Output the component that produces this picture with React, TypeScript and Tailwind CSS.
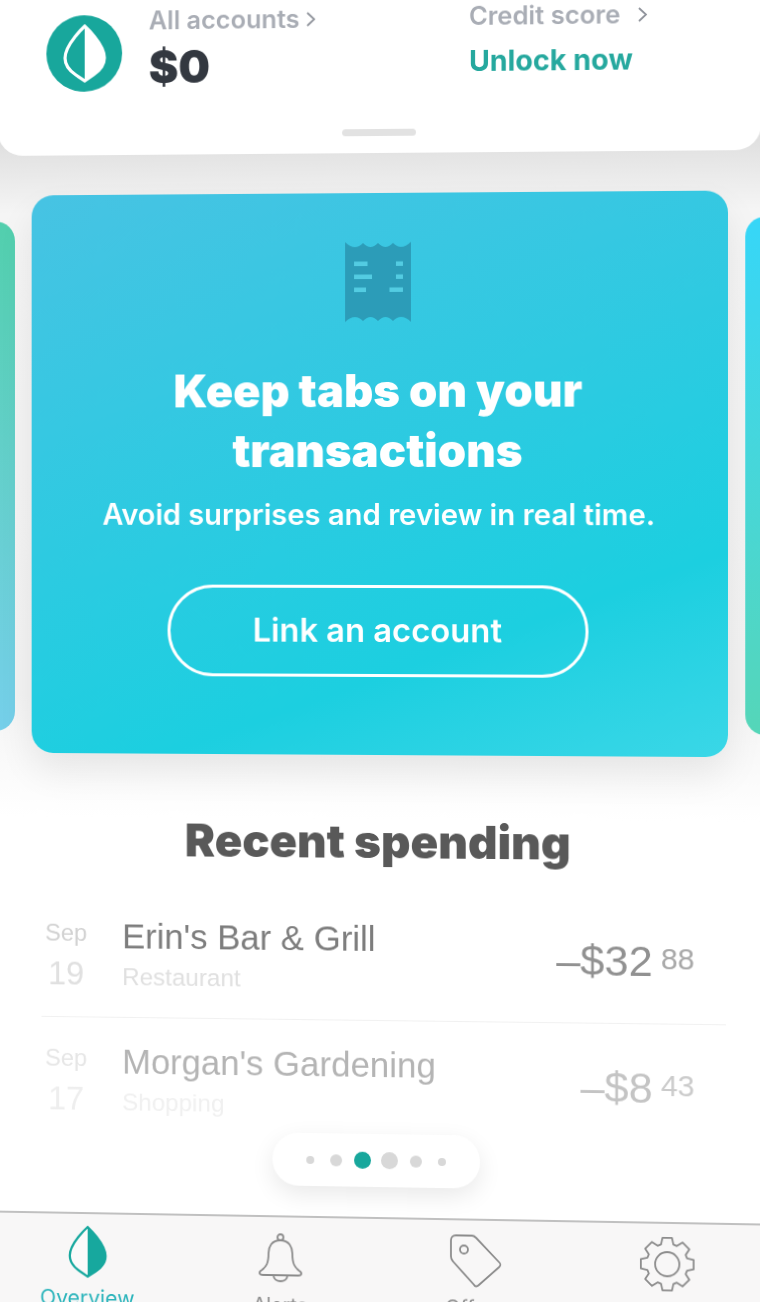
import React from "react";

const inter = "font-['Inter','Liberation_Sans',sans-serif]";

function Leaf({ className, cut }: { className?: string; cut?: boolean }) {
  const outline = "M20 1C20 1 40 19 40 33C40 41 35 46 29 50L20 56L11 50C5 46 0 41 0 33C0 19 20 1 20 1Z";
  const right = "M20 1C20 1 40 19 40 33C40 41 35 46 29 50L20 56Z";
  return (
    <svg viewBox="-2 -1 44 59" className={className}>
      {cut ? (
        <>
          <path d={outline} fill="none" stroke="#fff" strokeWidth="3.2" />
          <path d={right} fill="#fff" />
        </>
      ) : (
        <>
          <path d={outline} fill="#fbfafa" stroke="#17a89e" strokeWidth="2.5" />
          <path d={right} fill="#17a89e" />
        </>
      )}
    </svg>
  );
}

function Chevron() {
  return (
    <svg viewBox="0 0 9 15" className="w-[9px] h-[15px]" fill="none" stroke="#8f939b" strokeWidth="1.8">
      <path d="M1 1L8 7.5L1 14" />
    </svg>
  );
}

function Receipt() {
  return (
    <svg viewBox="0 0 66 80" className="w-[66px] h-[80px]">
      <path
        d="M0 0Q5 5 10 5Q14 5 18 1Q22 5 25.500 5Q29 5 33 1Q37 5 40.500 5Q44 5 48 1Q52 5 56 5Q61 5 66 0V80Q61 75 56 75Q52 75 48 79Q44 75 40.500 75Q37 75 33 79Q29 75 25.500 75Q22 75 18 79Q14 75 10 75Q5 75 0 80Z"
        fill="#2c9cb8"
      />
      <g fill="#53cce2">
        <rect x="9" y="19.500" width="13.500" height="4.500" />
        <rect x="9" y="32.500" width="18" height="4.500" />
        <rect x="9" y="45.500" width="12" height="4.500" />
        <rect x="51" y="19.500" width="7" height="4.500" />
        <rect x="51" y="32.500" width="7" height="4.500" />
        <rect x="44.500" y="45.500" width="13.500" height="4.500" />
      </g>
    </svg>
  );
}

function Bell() {
  return (
    <svg viewBox="0 0 44 50" className="w-[44px] h-[50px]" fill="none" stroke="#8c8c8c" strokeWidth="1.8">
      <circle cx="22" cy="4" r="3" />
      <path d="M22 7C13 7 10 14 10 20C10 30 8 34 2 38C0 40 1 42 4 42L40 42C43 42 44 40 42 38C36 34 34 30 34 20C34 14 31 7 22 7Z" />
      <path d="M15 42C15 50 29 50 29 42" />
    </svg>
  );
}

function Tag() {
  return (
    <svg viewBox="0 0 54 54" className="w-[54px] h-[54px]" fill="none" stroke="#8c8c8c" strokeWidth="1.8">
      <path d="M3 7C3 4 5 2 8 2L24 2C26 2 27 3 28 4L51 28C53 30 53 31 51 33L31 51C29 53 27 53 26 51L5 28C3 26 3 25 3 23Z" />
      <circle cx="16" cy="16" r="4" />
    </svg>
  );
}

// eight square teeth round a ring
function Gear() {
  const pts: string[] = [];
  const c = 28;
  for (let i = 0; i < 8; i++) {
    const a = (i * Math.PI) / 4;
    const s = Math.PI / 14;
    [
      [20.5, a - s * 1.35],
      [26.5, a - s * 0.8],
      [26.5, a + s * 0.8],
      [20.5, a + s * 1.35],
    ].forEach(([r, t]) => {
      pts.push(`${(c + r * Math.cos(t)).toFixed(1)},${(c + r * Math.sin(t)).toFixed(1)}`);
    });
  }
  return (
    <svg viewBox="0 0 56 56" className="w-[56px] h-[56px]" fill="none" stroke="#8c8c8c" strokeWidth="1.8" strokeLinejoin="round">
      <polygon points={pts.join(" ")} />
      <circle cx="28" cy="28" r="12" />
    </svg>
  );
}

function Row({
  mon,
  day,
  name,
  cat,
  dollars,
  cents,
  colors,
}: {
  mon: string;
  day: string;
  name: string;
  cat: string;
  dollars: string;
  cents: string;
  colors: string[];
}) {
  return (
    <div className="flex items-center h-[125px] font-['Liberation_Sans',sans-serif]">
      <div className="w-[50px] mr-[32px] pt-[6px] flex flex-col items-center">
        <span className={`text-[24px] leading-[30px] ${colors[0]}`}>{mon}</span>
        <span className={`text-[33px] leading-[48px] mt-[2px] ${colors[1]}`}>{day}</span>
      </div>
      <div className="flex-1 flex flex-col">
        <span className={`text-[35px] leading-[44px] ${colors[2]}`}>{name}</span>
        <span className={`text-[24.5px] leading-[38px] ${colors[3]}`}>{cat}</span>
      </div>
      <div className="flex items-start pr-[31px] pt-[1px]">
        <span className={`text-[43px] leading-[48px] ${colors[4]}`}>{dollars}</span>
        <span className={`text-[30px] leading-[36px] ml-[8px] mt-[4px] ${colors[5]}`}>{cents}</span>
      </div>
    </div>
  );
}

export default function App() {
  return (
    <div className="relative w-[760px] h-[1302px] overflow-hidden bg-white">
      {/* whole page is tilted slightly in the shot */}
      <div className={`w-[800px] h-[1367px] -ml-[23px] flex flex-col blur-[0.6px] origin-[400px_492px] [transform:perspective(3000px)_rotateY(-4deg)] ${inter}`}>
        {/* Top sheet */}
        <div className="relative z-10 h-[153px] shrink-0 ml-[16px] mr-[18px] bg-white rounded-b-[26px] flex pl-[50px] pt-[12px]">
          <div className="w-[77px] h-[77px] rounded-full bg-[#18a79c] flex items-center justify-center">
            <Leaf cut className="w-[44px] h-[59px]" />
          </div>
          <div className="w-[349px] pl-[27px] flex flex-col">
            <div className="flex items-center gap-[7px] text-[25.5px] leading-[10px] h-[10px] font-semibold text-[#a9adb5] mt-[1px]">
              All accounts <Chevron />
            </div>
            <div className="mt-[17px] text-[45px] leading-[50px] font-black text-[#333840]">$0</div>
          </div>
          <div className="flex flex-col -mt-[5px]">
            <div className="flex items-center gap-[18px] text-[25.5px] leading-[20px] font-semibold text-[#a9adb5]">
              Credit score <Chevron />
            </div>
            <div className="mt-[18px] text-[28.5px] leading-[34px] font-bold text-[#25a89e]">Unlock now</div>
          </div>
          <div className="absolute bottom-[17px] left-[349px] w-[74px] h-[7px] rounded-full bg-[#e2e2e2]" />
        </div>

        {/* Carousel */}
        <div className="h-[690px] shrink-0 -mt-[24px] pt-[64px] bg-[linear-gradient(180deg,#dcdcdc_0%,#f5f5f5_12%,#f3f3f3_82%,#ffffff_100%)] flex justify-center gap-[17px] items-start">
          <div className="w-[700px] h-[514px] mt-[26px] shrink-0 rounded-[20px] bg-gradient-to-b from-[#52cfad] to-[#75cfea]" />
          <div className="w-[698px] h-[562px] shrink-0 rounded-[22px] bg-[linear-gradient(160deg,#47c3e3_0%,#1ccfe0_75%,#3ad7e7_100%)] shadow-[0_18px_36px_rgba(0,0,0,0.08)] flex flex-col items-center text-white">
            <div className="mt-[49px] ml-[2px] h-[80px]">
              <Receipt />
            </div>
            <h2 className="mt-[39px] w-[520px] text-center text-[45.5px] leading-[60px] font-black">Keep tabs on your transactions</h2>
            <p className="mt-[14px] text-[29.3px] leading-[40px] font-semibold whitespace-nowrap">Avoid surprises and review in real time.</p>
            <button className="mt-[50px] w-[422px] h-[92px] rounded-full border-[3.5px] border-white text-[32.8px] font-semibold">Link an account</button>
          </div>
          <div className="w-[700px] h-[514px] mt-[26px] shrink-0 rounded-[20px] bg-gradient-to-b from-[#36d6f8] to-[#55d6b8]" />
        </div>

        {/* Recent spending */}
        <div className="flex-1 relative">
          <h2 className="text-center text-[45.8px] leading-[50px] font-black text-[#595959] -mt-[2px]">Recent spending</h2>
          <div className="mt-[28px] pl-[61px] pr-[53px]">
            <Row
              mon="Sep"
              day="19"
              name="Erin's Bar & Grill"
              cat="Restaurant"
              dollars="–$32"
              cents="88"
              colors={["text-[#d2d2d2]", "text-[#e0e0e0]", "text-[#7d7d7d]", "text-[#e0e0e0]", "text-[#919191]", "text-[#a8a8a8]"]}
            />
            <div className="h-px bg-[#f1f1f1]" />
            <Row
              mon="Sep"
              day="17"
              name="Morgan's Gardening"
              cat="Shopping"
              dollars="–$8"
              cents="43"
              colors={["text-[#e6e6e6]", "text-[#eeeeee]", "text-[#b4b4b4]", "text-[#f0f0f0]", "text-[#c4c4c4]", "text-[#cbcbcb]"]}
            />
          </div>
          {/* Pager pill */}
          <div className="absolute left-[295px] top-[315px] w-[208px] h-[53px] rounded-full bg-white shadow-[0_8px_24px_rgba(0,0,0,0.09)] flex items-center justify-center">
            <div className="flex items-center">
              <span className="w-[8px] h-[8px] rounded-full bg-[#d8d8d8] mx-[9px]" />
              <span className="w-[12px] h-[12px] rounded-full bg-[#d8d8d8] mx-[7px]" />
              <span className="w-[17px] h-[17px] rounded-full bg-[#18a79c] mx-[5px]" />
              <span className="w-[17px] h-[17px] rounded-full bg-[#d8d8d8] mx-[5px]" />
              <span className="w-[12px] h-[12px] rounded-full bg-[#d8d8d8] mx-[7px]" />
              <span className="w-[8px] h-[8px] rounded-full bg-[#d8d8d8] mx-[9px]" />
            </div>
          </div>
        </div>

        {/* Tab bar */}
        <div className="h-[150px] shrink-0 bg-[#f8f7f7] border-t-2 border-[#c0c0c0] grid grid-cols-4 px-[10px]">
          <div className="flex flex-col items-center pt-[11px]">
            <Leaf className="w-[40px] h-[54px]" />
            <span className="mt-[7px] text-[21.5px] leading-[24px] text-[#2bb4bb]">Overview</span>
          </div>
          <div className="flex flex-col items-center pt-[16px]">
            <Bell />
            <span className="mt-[10px] text-[20px] leading-[24px] text-[#8c8c8c]">Alerts</span>
          </div>
          <div className="flex flex-col items-center pt-[13px]">
            <Tag />
            <span className="mt-[8px] text-[20px] leading-[24px] text-[#8c8c8c]">Offers</span>
          </div>
          <div className="flex flex-col items-center pt-[12px] pr-[8px]">
            <Gear />
            <span className="mt-[12px] text-[20px] leading-[24px] text-[#8c8c8c]">Settings</span>
          </div>
        </div>
      </div>
    </div>
  );
}
